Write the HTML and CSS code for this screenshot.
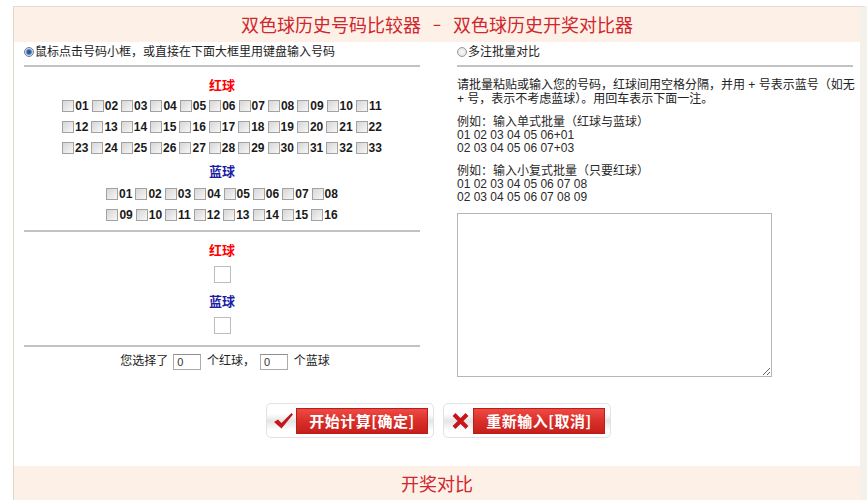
FILE: index.html
```html
<!DOCTYPE html>
<html lang="zh-CN">
<head>
<meta charset="utf-8">
<title>双色球历史号码比较器</title>
<link rel="stylesheet" href="styles.css">
</head>
<body>
<div class="page">
  <div class="head">双色球历史号码比较器 <span class="dash">－</span> 双色球历史开奖对比器</div>
  <div class="cols">
    <div class="col">
      <div class="mode"><span class="radio on"></span>鼠标点击号码小框，或直接在下面大框里用键盘输入号码</div>
      <div class="picker">
        <div class="lbl red first">红球</div>
        <div class="row">
          <label class="n"><i class="cb"></i>01</label><label class="n"><i class="cb"></i>02</label><label class="n"><i class="cb"></i>03</label><label class="n"><i class="cb"></i>04</label><label class="n"><i class="cb"></i>05</label><label class="n"><i class="cb"></i>06</label><label class="n"><i class="cb"></i>07</label><label class="n"><i class="cb"></i>08</label><label class="n"><i class="cb"></i>09</label><label class="n"><i class="cb"></i>10</label><label class="n"><i class="cb"></i>11</label>
        </div>
        <div class="row">
          <label class="n"><i class="cb"></i>12</label><label class="n"><i class="cb"></i>13</label><label class="n"><i class="cb"></i>14</label><label class="n"><i class="cb"></i>15</label><label class="n"><i class="cb"></i>16</label><label class="n"><i class="cb"></i>17</label><label class="n"><i class="cb"></i>18</label><label class="n"><i class="cb"></i>19</label><label class="n"><i class="cb"></i>20</label><label class="n"><i class="cb"></i>21</label><label class="n"><i class="cb"></i>22</label>
        </div>
        <div class="row">
          <label class="n"><i class="cb"></i>23</label><label class="n"><i class="cb"></i>24</label><label class="n"><i class="cb"></i>25</label><label class="n"><i class="cb"></i>26</label><label class="n"><i class="cb"></i>27</label><label class="n"><i class="cb"></i>28</label><label class="n"><i class="cb"></i>29</label><label class="n"><i class="cb"></i>30</label><label class="n"><i class="cb"></i>31</label><label class="n"><i class="cb"></i>32</label><label class="n"><i class="cb"></i>33</label>
        </div>
        <div class="lbl blue second">蓝球</div>
        <div class="row">
          <label class="n"><i class="cb"></i>01</label><label class="n"><i class="cb"></i>02</label><label class="n"><i class="cb"></i>03</label><label class="n"><i class="cb"></i>04</label><label class="n"><i class="cb"></i>05</label><label class="n"><i class="cb"></i>06</label><label class="n"><i class="cb"></i>07</label><label class="n"><i class="cb"></i>08</label>
        </div>
        <div class="row">
          <label class="n"><i class="cb"></i>09</label><label class="n"><i class="cb"></i>10</label><label class="n"><i class="cb"></i>11</label><label class="n"><i class="cb"></i>12</label><label class="n"><i class="cb"></i>13</label><label class="n"><i class="cb"></i>14</label><label class="n"><i class="cb"></i>15</label><label class="n"><i class="cb"></i>16</label>
        </div>
      </div>
      <div class="chosen">
        <div class="lbl red">红球</div>
        <div class="slot"></div>
        <div class="lbl blue">蓝球</div>
        <div class="slot"></div>
      </div>
      <div class="summary">您选择了<input class="cnt" value="0"> 个红球，<input class="cnt" value="0"> 个蓝球</div>
    </div>
    <div class="col">
      <div class="mode"><span class="radio"></span>多注批量对比</div>
      <p class="note">请批量粘贴或输入您的号码，红球间用空格分隔，并用 + 号表示蓝号（如无<br>+ 号，表示不考虑蓝球）。用回车表示下面一注。</p>
      <p class="ex">例如：输入单式批量（红球与蓝球）<br>01 02 03 04 05 06+01<br>02 03 04 05 06 07+03</p>
      <p class="ex">例如：输入小复式批量（只要红球）<br>01 02 03 04 05 06 07 08<br>02 03 04 05 06 07 08 09</p>
      <textarea class="batch"></textarea>
    </div>
  </div>
  <div class="actions">
    <div class="btn">
      <span class="ico"><svg width="21" height="18" viewBox="0 0 21 18"><path d="M1 10 L5 7.5 L8.5 11 L18.5 1 L20 2.5 L8.5 16.5 Z" fill="#c8141a"/></svg></span>
      <span class="go">开始计算[确定]</span>
    </div>
    <div class="btn">
      <span class="ico"><svg width="17" height="16" viewBox="0 0 17 16"><path d="M2 1.5 L15 14.5 M15 1.5 L2 14.5" stroke="#c8141a" stroke-width="4"/></svg></span>
      <span class="go">重新输入[取消]</span>
    </div>
  </div>
  <div class="foot">开奖对比</div>
</div>
</body>
</html>
```

FILE: styles.css
```css
body {
  margin: 0;
  background: #fff;
  font-family: "Liberation Sans", "Noto Sans CJK SC", sans-serif;
  font-size: 12px;
  color: #222;
}

.page {
  margin: 6px 0 0 13px;
  width: 846px;
  border-top: 1px solid #e6ddd4;
  border-left: 1px solid #e2d6ca;
  border-right: 7px solid #f3f1e9;
}

.head {
  height: 35px;
  line-height: 35px;
  background: #fdf1e7;
  color: #d0262d;
  font-size: 18px;
  text-align: center;
  font-family: "Noto Sans CJK SC", sans-serif;
  white-space: nowrap;
}

.dash {
  display: inline-block;
  transform: scaleX(0.5);
  margin: 0 3px;
}

.cols {
  display: flex;
  align-items: flex-start;
  gap: 37px;
  padding-left: 10px;
}

.col {
  width: 396px;
}

.mode {
  height: 23px;
  line-height: 20px;
  border-bottom: 2px solid #c2c2c2;
  color: #222;
  white-space: nowrap;
}

.radio {
  display: inline-block;
  box-sizing: border-box;
  width: 10px;
  height: 10px;
  border-radius: 50%;
  border: 1px solid #999;
  background: radial-gradient(circle, #fafafa 0, #dcdcdc 100%);
  vertical-align: -1px;
  margin-right: 1px;
}

.radio.on {
  border-color: #6d7f99;
  background: radial-gradient(circle, #244f96 0, #3564b0 2px, #c9d5e8 3.5px, #f2f2f2 5px);
}

.lbl {
  height: 20px;
  line-height: 20px;
  text-align: center;
  font-weight: bold;
  font-size: 13px;
  font-family: "Noto Sans CJK SC", sans-serif;
}

.red { color: #f00; }
.blue { color: #1b1ba6; }

.picker {
  padding-bottom: 5px;
  border-bottom: 2px solid #c2c2c2;
}

.picker .first { margin-top: 8px; }
.picker .second { margin-top: 3px; margin-bottom: 2px; }

.row {
  display: flex;
  justify-content: center;
  align-items: center;
  gap: 3px;
  height: 21px;
}

.n {
  display: flex;
  align-items: center;
  font-weight: bold;
  font-size: 12px;
  color: #1a1a1a;
}

.cb {
  display: inline-block;
  box-sizing: border-box;
  width: 12px;
  height: 12px;
  margin-right: 1px;
  border: 1px solid #a2a2a2;
  background: linear-gradient(135deg, #d6d6d6, #f7f7f7);
}

.chosen {
  padding-bottom: 11px;
  border-bottom: 2px solid #c2c2c2;
}

.chosen .lbl { margin-top: 8px; }

.slot {
  width: 15px;
  height: 15px;
  margin: 6px auto 0;
  border: 1px solid #bcbcbc;
  background: #fff;
}

.summary {
  height: 26px;
  line-height: 26px;
  text-align: center;
  font-family: "Noto Sans CJK SC", sans-serif;
  color: #222;
  padding-left: 6px;
}

.cnt {
  box-sizing: border-box;
  width: 28px;
  height: 16px;
  margin: 0 3px 0 5px;
  padding: 0 3px;
  border: 1px solid #ababab;
  border-top-color: #8e8e8e;
  font-family: "Liberation Sans", sans-serif;
  font-size: 11px;
  color: #333;
  vertical-align: middle;
}

.note {
  margin: 11px 0 0;
  line-height: 14px;
  color: #222;
  white-space: nowrap;
}

.ex {
  margin: 10px 0 0;
  line-height: 13px;
  color: #2a2a2a;
  white-space: nowrap;
}

.batch {
  display: block;
  box-sizing: border-box;
  width: 315px;
  height: 164px;
  margin-top: 9px;
  border: 1px solid #b6b6b6;
  background: #fff;
}

.actions {
  display: flex;
  justify-content: center;
  gap: 9px;
  margin-top: 26px;
  padding-left: 3px;
}

.btn {
  box-sizing: border-box;
  width: 168px;
  height: 35px;
  display: flex;
  align-items: center;
  padding: 0 5px 0 3px;
  border: 1px solid #e2e2e2;
  border-radius: 5px;
  background: linear-gradient(#fff 0, #fff 30%, #e4e4e4 52%, #fff 80%, #fff 100%);
}

.ico {
  flex: 1;
  display: flex;
  justify-content: center;
  align-items: center;
}

.go {
  box-sizing: border-box;
  width: 132px;
  height: 26px;
  line-height: 24px;
  border: 1px solid #b81d19;
  background: linear-gradient(#ee4a43, #da2f2a 50%, #c61f1b);
  color: #fff;
  font-family: "Noto Sans CJK SC", sans-serif;
  font-weight: bold;
  font-size: 15px;
  text-align: center;
  letter-spacing: 0.5px;
}

.foot {
  margin-top: 28px;
  height: 40px;
  line-height: 34px;
  background: #fdf0e6;
  color: #d0262d;
  font-size: 18px;
  text-align: center;
  font-family: "Noto Sans CJK SC", sans-serif;
}
```
